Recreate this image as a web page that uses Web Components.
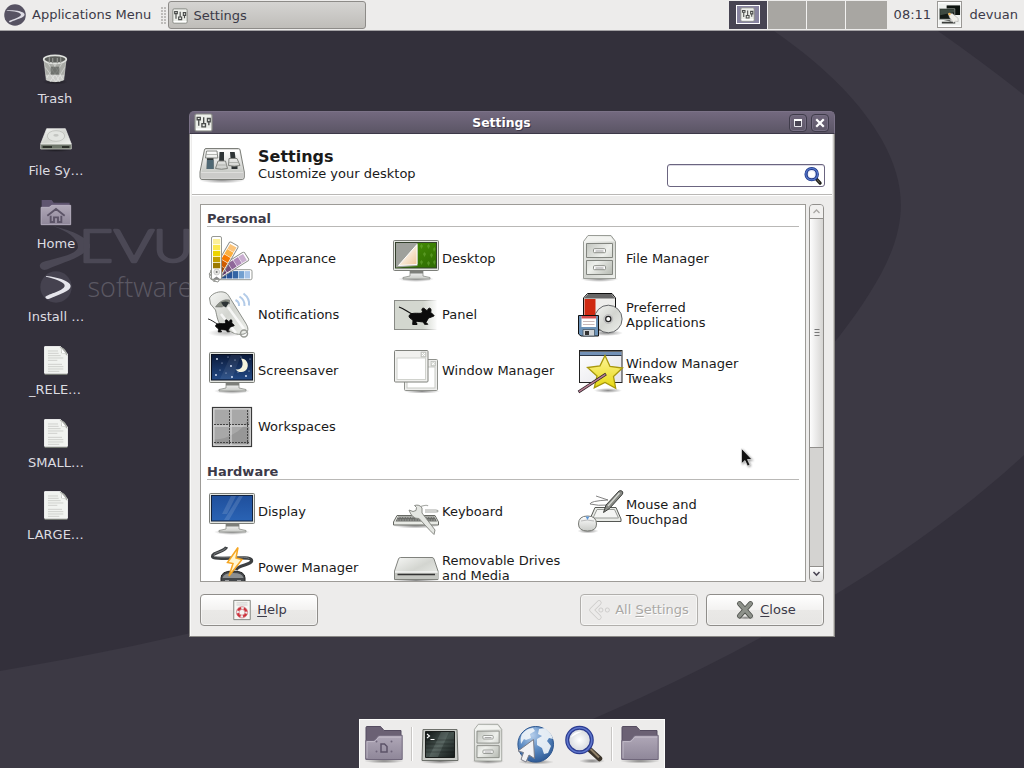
<!DOCTYPE html>
<html lang="en">
<head>
<meta charset="utf-8">
<title>Settings</title>
<style>
html,body{margin:0;height:100%;overflow:hidden;background:#33303b}
body{font:13px/15px "DejaVu Sans",Verdana,sans-serif;color:#1a1a1a}
</style>
</head>
<body>
<desk-top></desk-top>
<script>
const DEFS = `<defs>
<linearGradient id="m" x2="0" y2="1"><stop offset="0" stop-color="#fff"/><stop offset="1" stop-color="#c9cbc7"/></linearGradient>
<linearGradient id="md" x2="1" y2="1"><stop offset="0" stop-color="#f6f7f5"/><stop offset=".5" stop-color="#d3d5d0"/><stop offset="1" stop-color="#eef0ec"/></linearGradient>
<linearGradient id="dr" x2="1" y2="1"><stop offset="0" stop-color="#c2c5bf"/><stop offset=".5" stop-color="#eef0ec"/><stop offset="1" stop-color="#b4b8b0"/></linearGradient>
<linearGradient id="bl" x2="0" y2="1"><stop offset="0" stop-color="#1f4f9c"/><stop offset="1" stop-color="#2a63b4"/></linearGradient>
<linearGradient id="nt" x2="0" y2="1"><stop offset="0" stop-color="#0b1a3a"/><stop offset="1" stop-color="#234a86"/></linearGradient>
<linearGradient id="fo" x2="0" y2="1"><stop offset="0" stop-color="#b0a8b8"/><stop offset="1" stop-color="#8f8799"/></linearGradient>
<linearGradient id="ye" x2="0" y2="1"><stop offset="0" stop-color="#fff59a"/><stop offset="1" stop-color="#e6d80f"/></linearGradient>
<linearGradient id="pn" x2="1" y2="0"><stop offset="0" stop-color="#d3d7cf"/><stop offset=".65" stop-color="#d3d7cf"/><stop offset="1" stop-color="#fff"/></linearGradient>
<linearGradient id="ps" x2="1" y2="0"><stop offset="0" stop-color="#888a85"/><stop offset=".7" stop-color="#a0a29d"/><stop offset="1" stop-color="#fff"/></linearGradient>
<linearGradient id="gn" x2="1" y2="1"><stop offset="0" stop-color="#4a9407"/><stop offset="1" stop-color="#2e6b02"/></linearGradient>
<linearGradient id="pg" x2="1" y2="1"><stop offset=".3" stop-color="#fbf8f2"/><stop offset="1" stop-color="#f0c698"/></linearGradient>
<linearGradient id="te" x2="1" y2="1"><stop offset="0" stop-color="#0f1413"/><stop offset=".5" stop-color="#46534f"/><stop offset="1" stop-color="#141a19"/></linearGradient>
<radialGradient id="gl" cx=".4" cy=".25" r=".8"><stop offset="0" stop-color="#b4cdea"/><stop offset=".5" stop-color="#5d8cc4"/><stop offset="1" stop-color="#2b5691"/></radialGradient>
<radialGradient id="sh"><stop offset="0" stop-opacity=".45"/><stop offset="1" stop-opacity="0"/></radialGradient>
<radialGradient id="le" cx=".5" cy=".5" r=".6"><stop offset="0" stop-color="#fff"/><stop offset="1" stop-color="#c9cdd4"/></radialGradient>
<linearGradient id="wd" x2="1" y2="1"><stop offset="0" stop-color="#fff"/><stop offset="1" stop-color="#e4e4ea"/></linearGradient>
</defs>`;
const MOUSE = `<path d="M0 .5C5 2 8 5 13 7.500" fill="none" stroke="#111" stroke-width="1.200"/><path d="M10.500 8.500c2-2.500 8-1.500 12-1.700l1-1.800c-1.500-2.500 0-4 1.800-3l1.700 1.700 1.500.3c.5-3 3.500-3 3.500-.5l-.3 2.500 3 2.500c.8.800 0 1.500-1.500 1.700l-3.700 1.300c-.8 1.500-1.500 2.500-2.500 4.500l1.800 1.800h-3.300l-1-2.300-7-.8-.8 2.300h1.300v1h-4.300l.3-3.800-1.800-2c-2-1-2.700-2.200-1.700-3.700z" fill="#0b0b0b" stroke="#0b0b0b"/>`;
const BEZEL = `<ellipse cx="24" cy="45" rx="18" ry="3" fill="url(#sh)"/><path d="M18 36h13v6l7 1.500v1.500H11v-1.500l7-1.500z" fill="url(#m)" stroke="#8d8f8a" stroke-width=".8"/><path d="M18 37h13v2.500H18z" fill="#7d7f7a"/><rect x="1.500" y="6.500" width="45" height="30" rx="1" fill="#e4e6e1" stroke="#7c7e79"/>`;
const CAB = `<ellipse cx="23.500" cy="45" rx="19" ry="3" fill="url(#sh)"/><path d="M7.500 7.500L12 1.500H35L39.500 7.500V44.500H7.500z" fill="url(#md)" stroke="#9a9d97"/><path d="M8.500 7.500L12.500 2.500H34.500L38.500 7.500z" fill="#f2f3f0"/><g fill="url(#dr)" stroke="#82857f"><path d="M10.500 9.500h26v14h-26zM10.500 26.500h26v14h-26z"/><rect x="17.500" y="14.700" width="12" height="4" rx="1" fill="#fff" stroke="#8a8d87"/><rect x="17.500" y="31.700" width="12" height="4" rx="1" fill="#fff" stroke="#8a8d87"/></g><path d="M19.500 17h8M19.500 34h8" stroke="#999"/>`;
const strip = (r, c) => `<g transform="translate(8.500 40.700) rotate(${r})"><rect x="-5" y="-35.500" width="10" height="41.500" rx="1.500" fill="#fff" stroke="#8b8d88" stroke-width=".9"/>${c.map((k, i) => `<rect x="-3.600" y="${-33.500 + i * 6}" width="7.400" height="5.500" fill="${k}"/>`).join('')}</g>`;
const stars = [[9,13],[14,17],[20,11],[23,20],[27,14],[12,24],[8,29],[18,27],[30,26],[38,30],[42,13],[41,25],[24,31],[33,11]];
const FOLDER = `<ellipse cx="24" cy="41" rx="20" ry="2.500" fill="url(#sh)"/><path d="M6 39V7.500q0-1 1-1h13q1 0 1.500 1l2.500 3H41v10z" fill="#6b6174" stroke="#554c60"/><path d="M5.800 39.500V20.500H13q1.500 0 2.500-1.200l2.500-3.100q1-.9 2-.9h22.200V39.500z" fill="url(#fo)" stroke="#6f667a"/><path d="M7 38V21.600h6.500q1.500 0 2.500-1.200l2.700-3.200h22.500" fill="none" stroke="#c6c0cd" stroke-width=".8"/>`;
const ICONS = {
appearance: strip(90, ['#a5c3e8','#729fcf','#3465a4','#2a5599','#204a87']) + strip(58, ['#c9aed0','#b08aba','#8f6799','#75507b','#5c3566']) + strip(30, ['#fcc479','#fcaf3e','#f57900','#ce5c00','#a04800']) + `<rect x="3.500" y="2.500" width="10" height="43" rx="1.500" fill="#fff" stroke="#8b8d88" stroke-width=".9"/><path fill="#fcf09a" d="M5 5h7.200v5.300H5z"/><path fill="#fce94f" d="M5 11h7.200v5.300H5z"/><path fill="#edd400" d="M5 17h7.200v5.300H5z"/><path fill="#c4a000" d="M5 23h7.200v5.300H5z"/><path fill="#9c7a00" d="M5 29h7.200v5.300H5z"/><circle cx="8.700" cy="38" r="3" fill="#e6e6e2" stroke="#bbb" stroke-width=".6"/><circle cx="8.700" cy="38" r="1" fill="#777"/><path d="M5 45l3.500-2.500 3.500 2.500" fill="#888"/>`,
desktop: BEZEL + `<rect x="3.500" y="8.500" width="41" height="25.500" fill="url(#gn)" stroke="#33402c"/><g fill="#7db84a" opacity=".45"><path d="M28 12l1.500-2 1.500 2-1.500 3zM35 12l1.500-2 1.500 2-1.500 3zM41 15l1.500-2 1 2-1.500 3zM31 20l1.500-2 1.500 2-1.500 3zM38 21l1.500-2 1.500 2-1.500 3zM28 28l1.500-2 1.500 2-1.500 3zM35 29l1.500-2 1.500 2-1.500 3zM41 28l1.500-2 1 2-1 3z"/></g><path d="M4 9h21.500v23L4 33.500z" fill="#9fa19c"/><path d="M6.500 31.500L25 10.500V30.500z" fill="url(#pg)" stroke="#fff"/>`,
files: CAB,
notify: `<ellipse cx="18" cy="43" rx="18" ry="4" fill="url(#sh)" opacity=".6"/><path d="M1.500 8C4 3 12 .5 17 2.500c3 1 4 4 6 7L37 32c4 6 4 10-1 12-5 1-10 0-14-3L13 36C9 30 9 26 7.500 20L2.500 14z" fill="url(#md)" stroke="#8d908a"/><path d="M13 24l15 19M20 17l16 22" stroke="#fff" stroke-width="2.500" opacity=".8"/><path d="M7.500 17c4-6 9-8 14-7l0 4c-3-1-6 3-8 3z" fill="#8b9086" stroke="#666" stroke-width=".5"/><path d="M13 12.500q5-2 8 0l-3 5q-3-1-5-5z" fill="#2e3436"/><circle cx="36" cy="43.500" r="3.500" fill="none" stroke="#9a9c97" stroke-width="1.500"/><g fill="none" stroke="#b3cbe8" stroke-width="2"><path d="M27.500 10q4 2 3.500 6M31.500 6.500q5.500 3.500 5 9.500M35.500 3.500q6.500 5 5.500 12"/></g><g transform="translate(0 28.500) scale(.75)">${MOUSE}</g>`,
panel: `<rect x="2.500" y="10.500" width="43.500" height="29" fill="url(#pn)" stroke="url(#ps)"/><path d="M44.500 10v30h3V10z" fill="#fff" opacity=".8"/><g transform="translate(7 16.500)">${MOUSE}</g>`,
prefs: `<ellipse cx="30" cy="43" rx="17" ry="3" fill="url(#sh)"/><path d="M7.500 8l4-4.500H36L39.500 8v32h-32z" fill="#eeeeec" stroke="#111"/><path d="M8 8.500l4-4.500H35.500l3.500 4.500z" fill="#666"/><path d="M8.500 9h11v17h-11z" fill="#cf2a12"/><circle cx="32.300" cy="29" r="13.800" fill="url(#md)" stroke="#55575a" stroke-width=".9"/><circle cx="32.300" cy="29" r="4.500" fill="#ccc" stroke="#aaa" stroke-width=".5"/><circle cx="32.300" cy="29" r="2.600" fill="#fff" stroke="#222" stroke-width="1.200"/><path d="M2.500 25.500h20V46H5l-2.500-2z" fill="#6d93b8" stroke="#111"/><path d="M5.500 26h14.500v11H5.500z" fill="#fff"/><path d="M5.500 26h14.500v2.500H5.500z" fill="#d85050"/><path d="M7 31.500h11.500M7 34.500h11.500" stroke="#c9b9b9"/><path d="M7 39.500h11.500V46H7z" fill="#cfd3d6" stroke="#456" stroke-width=".8"/><path d="M9 41h4v4H9z" fill="#333"/>`,
saver: BEZEL + `<rect x="3.500" y="8.500" width="41" height="25.500" fill="url(#nt)" stroke="#0a1020"/><path d="M23 9h10l-9 24H12z" fill="#fff" opacity=".07"/><path d="M33 12.500a6.800 6.800 0 1 1-5.500 10.800c6.500 1.500 9-5 5.500-10.800z" fill="#f5f3dc"/>` + stars.map((s, i) => `<circle cx="${s[0]}" cy="${s[1]}" r="${i % 3 ? .5 : .9}" fill="#e5edff"/>`).join(''),
wm: `<ellipse cx="30" cy="45.500" rx="18" ry="2" fill="url(#sh)"/><g><rect x="12.500" y="13.500" width="33" height="31" rx="1" fill="#eeeeec" stroke="#8f918c"/><rect x="15" y="21" width="28" height="21" fill="#fff" stroke="#c8cac5"/><rect x="39" y="15.500" width="4.500" height="4.500" fill="#d8dad5" stroke="#b5b7b2" stroke-width=".6"/><rect x="2.500" y="4.500" width="33.500" height="31.500" rx="1" fill="#f1f1ef" stroke="#80827d"/><rect x="5" y="12" width="28.500" height="21.500" fill="#fff" stroke="#d0d2cd"/><rect x="29" y="6" width="5" height="5" fill="#d3d5d0" stroke="#b5b7b2" stroke-width=".6"/><path d="M30 7l3 3M33 7l-3 3M40 16.500l2.500 2.500M42.500 16.500L40 19" stroke="#fff"/></g>`,
tweaks: `<ellipse cx="32" cy="44.500" rx="14" ry="2.500" fill="url(#sh)"/><rect x="3.500" y="4.500" width="42.500" height="32" fill="url(#wd)" stroke="#222"/><path d="M4 5h41.500v1.500H4z" fill="#666"/><path d="M4 6h41.500v3H4z" fill="#7291b8"/><path d="M4 9.500h41.500" stroke="#2a3648"/><path d="M29 9.500L34 20.500 46.500 22 37.500 30.500 39.700 42.300 29 36.500 18.300 41.700 21 30 11.500 21.500 24 19.800z" fill="url(#ye)" stroke="#a8980c" stroke-width="1.300"/><path d="M2.500 46L30 28" stroke="#2d2028" stroke-width="2.800"/><path d="M3 45.700L29.500 28.400" stroke="#b98094" stroke-width="1.400"/>`,
spaces: `<rect x="4.500" y="5.500" width="39" height="39" fill="#dcdcdc" stroke="#3a3a3a" stroke-width="1.200"/><path d="M6.500 7.500h16v16h-16zM23.500 7.500h18v16h-18zM6.500 24.500h16v18h-16zM23.500 24.500h18v18h-18z" fill="#979797"/><path d="M6.500 7.500h35q0 14-12 22t-23 8z" fill="#fff" opacity=".17"/><path d="M6 22.500h36M21.500 8v34M39.500 8v34M6 40.500h36" stroke="#444" stroke-width="1" stroke-dasharray="2 1"/>`,
display: BEZEL + `<rect x="3.500" y="8.500" width="41" height="25.500" fill="url(#bl)" stroke="#12233f"/><path d="M23 9h5l-9 18h-5zM31 9h4l-14 24h-5z" fill="#fff" opacity=".13"/>`,
keyboard: `<ellipse cx="24" cy="39" rx="23" ry="2.500" fill="url(#sh)"/><path d="M5 28.500H43L46.500 35v3H1.500v-3z" fill="#e8eae5" stroke="#666863"/><path d="M6 29.500h36.500l2.500 5H3.500z" fill="#6a6c68"/><path d="M6 30.500h38M5 33h40" stroke="#bbb" stroke-width=".7" stroke-dasharray="1.600 1"/><path d="M27 20q8-3 9-1M33 25h11q2 0 2-1t-2-1H33" fill="none" stroke="#a6a8a4" stroke-width="1.200"/><path d="M17 23l4 1.500 3-1 .5-3-2-2q5-1.500 7.500 2.500l0 5L43 43l-1 4.500-4-4L27 31.500q-7 .5-10-8.500z" fill="#e4e6e2" stroke="#8a8c87"/>`,
touch: `<path d="M19 20.500H40L45 32v2.500H14V32z" fill="#e9ebe7" stroke="#555753"/><path d="M21 22.500h17.500l4 8.500H17z" fill="#f4f5f3" stroke="#999b97"/><path d="M20 9l12 4q-18 1-18 4 8 2 18 1" fill="none" stroke="#777" stroke-width=".9"/><path d="M27.500 25.500L30 18 43 4q2-1 3.500.5.800 1.500-.3 3L33.500 21.500z" fill="#888a85" stroke="#3f413e"/><path d="M32 19L43.500 6" stroke="#d8dad5" stroke-width="1.300"/><ellipse cx="12" cy="44" rx="10.500" ry="2.500" fill="url(#sh)"/><path d="M2.500 37q0-8 9-8t9 8q0 7-9 7t-9-7z" fill="url(#m)" stroke="#777974"/><path d="M5 34q6-2 13 0" fill="none" stroke="#bbb"/><path d="M9.500 29.500h4L11.500 33z" fill="#5b94d6"/>`,
power: `<path d="M18.500 4C17 9 4 9 4.500 13.500S42 12 43.500 17 30 21.500 28 27" fill="none" stroke="#3d4042" stroke-width="3.200"/><path d="M17.500 5C16 9 5 9 6 12.500S40 12 41.500 16" fill="none" stroke="#8a8d8f" stroke-width=".8"/><path d="M13 48V35q0-7 12-7t12 7v13z" fill="#44474a" stroke="#222"/><path d="M14.500 35q1-5 10.500-5t10.500 5z" fill="#8b8e90"/><path d="M17 38h4M29 38h4" stroke="#eee"/><path d="M30 4.500L19.500 19.500 25 20.500 21 33 34 16.500 28 15z" fill="#fff6d0" stroke="#f5a623" stroke-width="1.500"/>`,
drive: `<ellipse cx="24" cy="37.500" rx="23" ry="2.500" fill="url(#sh)"/><path d="M8.500 14.500H40q1.500 0 2 1.500L46 28v8.500H2.500V28L6.500 16q.5-1.500 2-1.500z" fill="url(#md)" stroke="#80827d"/><path d="M3 29.500h43v6.500H3z" fill="#c4c6c1"/><path d="M5.500 31.500h37.500" stroke="#333" stroke-width="1.600"/><path d="M3 29h43" stroke="#fff"/>`,
mixer: `<ellipse cx="24" cy="40" rx="23" ry="3.500" fill="url(#sh)"/><path d="M8 8.500H40.500q1.300 0 1.600 1.500L46.300 32v5q0 2.500-2 2.500H4q-2 0-2-2.500v-5L6.400 10q.3-1.500 1.600-1.500z" fill="#dededc" stroke="#7d7f7a"/><path d="M3.500 32h41.500L41 10H7.500z" fill="url(#m)"/><path d="M3 33h42.500v4q0 1.500-1.500 1.500H4.500Q3 38.500 3 37z" fill="#cbcbc9"/><path d="M9 16h6.500v13H8.700zM21.500 12h4.500v11h-5zM32 12h4.700l.8 6h-5zM33.500 25h6v4h-6z" fill="#2e3436"/><path d="M9 20h6.500v9H8.700z" fill="#4f6874"/><g fill="url(#m)" stroke="#777974" stroke-width=".9"><path d="M8.500 11h10.500l.8 7H7.500zM20 21h7.500l2 7.500q-6 1.500-12 0zM31 18.500h8l3 7q-6 1.500-11.500 0z"/></g><path d="M7.800 14.500h11.700M18.500 25h10.500M31 22.500h9.500" stroke="#a5a7a2" stroke-width=".8"/>`,
mini: `<rect x="2.500" y="2.500" width="43" height="43" rx="4" fill="#eceee9" stroke="#8a8c87" stroke-width="3"/><path d="M5 39h38v4H5z" fill="#fff"/><g fill="none" stroke="#4a4c4b" stroke-width="3.400"><path d="M8 11v6h8v-6zM12 17v15M20 27v8h9v-8zM24.500 11v16M34 14v8h7v-8zM37.500 22v9"/></g>`,
swirl: `<circle cx="24" cy="24" r="23.500" fill="#565262"/><path d="M6 14C24 13 44 16 45 23 45 30 26 34 15 39q-4 1.500-4-1c0-3 26-8 26-14.500C37 18 22 15 6 15z" fill="#dddce4"/>`,
install: `<circle cx="24" cy="25.500" r="23.500" fill="#45424f"/><path d="M9 9C28 11 46 17 46 24 46 32 28 37 14 43q-5 2-6-2c0-4 27-9 29-17C38 18 22 13 9 10z" fill="#e6e6ec"/>`,
trash: `<g transform="translate(1.500 3)"><ellipse cx="23" cy="42" rx="19" ry="4" fill="url(#sh)"/><path d="M6 9l3.500 30q13 5 26 0L39 9z" fill="#a9aba6" stroke="#d8dad5"/><path d="M12 14l18 28M20 14l14 24M8 20l16 22M33 14L15 42M25 14L10 36M37 20L24 42" stroke="#d2d4d0" stroke-width="1.200"/><path d="M16 19h13v12H16z" fill="#4a4c4a" opacity=".6"/><path d="M8.500 31l1.500 8q12.500 5 25 0l1.500-8z" fill="#fff" opacity=".4"/><ellipse cx="22.500" cy="8" rx="17" ry="6" fill="#5b5d5a" stroke="#dfe1dd" stroke-width="2.500"/><path d="M14 5v8M19 6v8M26 6v8M31 5v8" stroke="#8d8f8b" stroke-width="2"/></g>`,
disk: `<g transform="translate(0 1)"><ellipse cx="24" cy="38" rx="24" ry="3" fill="url(#sh)"/><path d="M10 6H38L47 29H1z" fill="url(#md)" stroke="#f5f5f3"/><ellipse cx="24" cy="17" rx="13" ry="8" fill="#e3e5e1" stroke="#b5b7b2"/><ellipse cx="24" cy="16" rx="4" ry="2" fill="#c4c6c2"/><path d="M1 29.500h46v7H1z" fill="#6f776b" stroke="#dcdfd8"/><path d="M4 33.500h14M33 33.500h11" stroke="#2c302a" stroke-width="3"/></g>`,
home: `<path d="M2.500 34V4.500h15l3 4h24v12z" fill="#5f5570"/><path d="M1.700 41.500V15.500h12l4-3h28.300v29z" fill="url(#fo)" stroke="#bdb6c6" stroke-width="1.300"/><path d="M11 28L24 18 37 28M16 28v9.500h5v-7h6v7h5V28" fill="none" stroke="#5c5467" stroke-width="2.800"/>`,
doc: `<g transform="translate(0 2.500)"><path d="M7 3h24l10 11v29H7z" fill="#f1f3f0" stroke="#fff" stroke-width="1.500"/><path d="M7 44.500h34" stroke="#84897f" stroke-width="1.500"/><path d="M29 3q4 2 3 10 6-1 9 4C41 9 36 4 29 3z" fill="#a9aca6"/><path d="M32 5l1 7.500 6 1z" fill="#fff"/><path d="M12 9.500h15M12 13h16M12 16.500h19M12 20h23M12 23.500h14M12 29.500h21M12 33h23M12 36.500h23M12 40h17" stroke="#cfd1cd" stroke-width="1.500"/></g>`,
user: `<rect x="1" y="1" width="46" height="46" fill="#eef0ee"/><path d="M18 5h28v20H18z" fill="#0c120e"/><path d="M3 12h32v22H3z" fill="#141b17" stroke="#a8ada8" stroke-width="1.500"/><path d="M4.500 13.500h29v6l-29 6z" fill="#3d4a41"/><path d="M12 36h14v3H8v4h28v-3" fill="#3a3d3a"/><path d="M21 22l9 0 12 10v7l-5-1-5 3-8-11z" fill="#efeee8" stroke="#999"/><circle cx="24" cy="23" r="2.500" fill="#f3b64c"/>`,
search: `<path d="M32 31L43 43" stroke="#1c1c18" stroke-width="8.500" stroke-linecap="round"/><path d="M35 34l7 8" stroke="#6a6654" stroke-width="3"/><circle cx="20.500" cy="19" r="15" fill="#e8ecf8" stroke="#1d3686" stroke-width="8.500"/><circle cx="20.500" cy="19" r="15.500" fill="none" stroke="#5475c8" stroke-width="3.500"/><circle cx="20.500" cy="19" r="8" fill="#fff"/>`,
help: `<path d="M6 3h36v42H6z" fill="#f6f6f4" stroke="#7d7f7a" stroke-width="2"/><path d="M12 8.500h24M12 13h24" stroke="#c4c4c2" stroke-width="1.800"/><circle cx="24" cy="29" r="9.500" fill="none" stroke="#ececec" stroke-width="6"/><circle cx="24" cy="29" r="9.500" fill="none" stroke="#d0303a" stroke-width="5" stroke-dasharray="9 5.920" stroke-dashoffset="-3"/><circle cx="24" cy="29" r="12.300" fill="none" stroke="#c2505a" stroke-width="1.200"/><circle cx="24" cy="29" r="6.300" fill="none" stroke="#c2505a" stroke-width="1.200"/>`,
close: `<ellipse cx="25" cy="41" rx="20" ry="4" fill="url(#sh)"/><path d="M12 10L36 37M36 10L12 37" stroke="#4d504b" stroke-width="11" stroke-linecap="round"/><path d="M12 10L36 37M36 10L12 37" stroke="#8d918a" stroke-width="7.500" stroke-linecap="round"/>`,
back: `<path d="M22 8L6 24 22 40" fill="none" stroke="#cccbc9" stroke-width="11" stroke-linejoin="round" stroke-linecap="round"/><path d="M22 8L6 24 22 40" fill="none" stroke="#ecebea" stroke-width="7.500" stroke-linejoin="round" stroke-linecap="round"/><g fill="#ecebea" stroke="#cccbc9" stroke-width="2"><circle cx="26" cy="24" r="4.500"/><circle cx="40" cy="24" r="4.500"/></g>`,
folder: FOLDER,
folderD: FOLDER + `<path d="M21 24h3.500l2.500 2.500v5.500h-6z" fill="none" stroke="#5c5368" stroke-width="1.500"/><g fill="#6f667b"><circle cx="16.500" cy="21.500" r="1"/><circle cx="31.500" cy="21.500" r="1"/><circle cx="16.500" cy="31.500" r="1"/><circle cx="31.500" cy="31.500" r="1"/></g>`,
term: `<ellipse cx="24" cy="41.500" rx="20" ry="2.500" fill="url(#sh)"/><path d="M7 9.500h34l1 31H6z" fill="#c9ccc7" stroke="#6d706b"/><path d="M9.500 11.500h29v26h-29z" fill="url(#te)" stroke="#1a1d1b"/><path d="M25 12h8l-11 25h-9z" fill="#a5b5ae" opacity=".2"/><path d="M10 20h28M10 24h28M10 28h28M10 32h28" stroke="#000" opacity=".25"/><path d="M11 14l2.500 2-2.500 2M14.500 19.500h4" fill="none" stroke="#fff" stroke-width="1.100"/>`,
globe: `<ellipse cx="24" cy="42" rx="18" ry="2.500" fill="url(#sh)"/><circle cx="23.700" cy="24.300" r="17.800" fill="url(#gl)" stroke="#2c568f"/><path d="M10 14q5-6 11-6l2 3-5 3 1 4-5 2-2-1-3 5q-1-6 1-10zM27 9l6-1q6 4 8 11l-4-1-2 3 4 5-3 7-4 1-2-6-5-3 0-6 5-3-4-2z" fill="#eef3f8" opacity=".93"/><path d="M21.500 19.500L6 31 11.500 32.500 9 39.500l5 2.500 3-7 5.500 3.500z" fill="#f2f2f4" stroke="#7b7d88"/>`,
mag: `<ellipse cx="32" cy="41" rx="13" ry="2.500" fill="url(#sh)"/><path d="M29 29L39.500 38.500" stroke="#3b342a" stroke-width="5.500" stroke-linecap="round"/><path d="M30.500 29L39 37.500" stroke="#8f8068" stroke-width="2"/><circle cx="19.500" cy="20" r="12.300" fill="url(#le)" stroke="#2b3b91" stroke-width="4"/><circle cx="19.500" cy="20" r="12.300" fill="none" stroke="#5f77cc" stroke-width="1.600"/><path d="M10.500 18q3-7.500 12-6.500-8 3-12 6.500z" fill="#fff"/>`
};
const def = (tag, html) => customElements.define(tag, class extends HTMLElement {
  connectedCallback() {
    if (this.shadowRoot) return;
    const t = document.createElement('template');
    t.innerHTML = typeof html === 'function' ? html(this) : html;
    this.attachShadow({mode: 'open'}).append(t.content.cloneNode(true));
  }
});

def('x-glyph', el => `<style>:host{display:block;flex:none;width:var(--s,48px);height:var(--s,48px)}svg{display:block;width:100%;height:100%;overflow:visible}</style><svg viewBox="0 0 48 48">${DEFS}${ICONS[el.getAttribute('name')]}</svg>`);

def('wall-paper', `<style>:host{display:block;width:1024px;height:768px}svg{display:block}</style>
<svg width="1024" height="768" viewBox="0 0 1024 768"><rect width="1024" height="768" fill="#33303b"/>
<path d="M774 31C830 70 862 105 882 140 918 205 902 255 838 338 720 470 420 600 0 671V768H470C700 684 900 570 1024 455V95Q985 64 938 31z" fill="#3c3944"/>
<path d="M53 226C74 231 89 238 88.500 246 87 257 60 263 47 269.500 40 272 37 264 43 262 55 258 77 255 78 247 78 238 67 231 53 226z" fill="#4b4855"/>
<g fill="#4b4855" stroke="#4b4855" stroke-width="2.600" stroke-linejoin="round" font-family="Lato,sans-serif" font-weight="300" font-size="45"><text x="79" y="262" textLength="34" lengthAdjust="spacingAndGlyphs">E</text><text x="114" y="262" textLength="40" lengthAdjust="spacingAndGlyphs">V</text><text x="153" y="262" textLength="40" lengthAdjust="spacingAndGlyphs">U</text></g>
<path d="M90 236h24v18H90z" fill="#33303b"/>
<text x="87.500" y="297" fill="#5b5863" font-family="Open Sans,sans-serif" font-weight="300" font-size="27" textLength="105">software</text></svg>`);

def('work-pager', `<style>:host{display:flex;gap:1px;height:28px;background:#f3f2f1;width:158px}
i{display:block;width:38px;background:#a8a6a2}i:last-child{flex:1}.a{background:#474452;display:flex;align-items:center;justify-content:center}
b{box-sizing:border-box;width:24px;height:19px;border:1px solid #fff;background:#8884a0;display:flex;align-items:center;justify-content:center;--s:15px}.a{padding-bottom:1px;box-sizing:border-box}</style><i class="a"><b><x-glyph name="mini"></x-glyph></b></i><i></i><i></i><i></i>`);

def('top-panel', `<style>:host{display:flex;box-sizing:border-box;height:31px;background:#edeceb;border-bottom:1px solid #a3a1a4;color:#3c3a48;align-items:flex-start;padding:1px 6px 0 4px}
span{line-height:15px;padding-top:6px;white-space:nowrap}
.menu{display:flex;width:157px;--s:22px}.menu x-glyph{margin:3px 6px 0 0}
.grip{width:5px;height:17px;margin:6px 2px 0 0;background:radial-gradient(circle at 1px 1px,#bcbab8 .7px,transparent .9px) 0 0/3px 3px}
.task{box-sizing:border-box;width:198px;height:28px;border:1px solid #8d8b88;border-radius:3px;background:linear-gradient(#d5d4d2,#bfbdb9);display:flex;--s:16px;padding-left:3px}
.task x-glyph{margin:6px 5.500px 0 0}
.sp{flex:1}.clock{margin-left:7px;width:43px}.u{box-sizing:border-box;width:25px;height:27px;border:1px solid #9a9895;background:#fff;padding:1px 0 0;--s:23px;margin-right:8px}</style>
<div class="menu"><x-glyph name="swirl"></x-glyph><span>Applications Menu</span></div><div class="grip"></div>
<div class="task"><x-glyph name="mini"></x-glyph><span>Settings</span></div><div class="sp"></div>
<work-pager></work-pager><span class="clock">08:11</span><div class="u"><x-glyph name="user"></x-glyph></div><span>devuan</span>`);

def('desk-icon', `<style>:host{display:flex;flex-direction:column;align-items:center;height:var(--row,73px);color:#dddce1;--s:32px;white-space:nowrap}span{margin-top:7px}</style><slot name="icon"></slot><span><slot></slot></span>`);

def('title-bar', `<style>:host{display:flex;box-sizing:border-box;height:23px;border:1px solid #7b7287;border-bottom:1px solid #3c3848;border-radius:5px 5px 0 0;background:linear-gradient(#73697f,#5b5565);color:#fff;align-items:center;padding:0 5px 0 4px;--s:19px;font-weight:bold;font-size:12.400px}
span{flex:1;text-align:center;padding-left:5px;line-height:21px;text-shadow:1px 1px #3e394a}
i{box-sizing:border-box;width:18px;height:18px;border:1px solid #3f3b4a;border-radius:4px;margin-left:4px;box-shadow:inset 0 0 0 1px #756d82}svg{display:block}</style>
<x-glyph name="mini"></x-glyph><span><slot></slot></span>
<i><svg width="16" height="16"><path d="M4.500 4.500h7v7h-7z" fill="#4a4654" stroke="#e8e7ec"/><path d="M4 5h8" stroke="#fff" stroke-width="2"/></svg></i><i><svg width="16" height="16"><path d="M5 5l6 6M11 5l-6 6" stroke="#fff" stroke-width="2.200" stroke-linecap="square"/></svg></i>`);

def('search-entry', `<style>:host{display:flex;box-sizing:border-box;width:158px;height:23px;border:1.500px solid #6b6580;border-radius:3px;background:#fff;box-shadow:inset 0 1px #dcdae4;justify-content:flex-end;align-items:center;padding-right:2px;--s:18px}</style><x-glyph name="search"></x-glyph>`);

def('dialog-header', `<style>:host{display:flex;box-sizing:border-box;height:61px;background:#fff;border-bottom:1px solid #bab8b6;padding:6px 7px 0 6px}
div{margin-left:12px;flex:1}h1{font-size:16px;line-height:19px;margin:7px 0 0}p{margin:0;line-height:15px}search-entry{margin-top:24px}</style>
<x-glyph name="mixer"></x-glyph><div><h1>Settings</h1><p>Customize your desktop</p></div><search-entry></search-entry>`);

def('setting-item', el => `<style>:host{display:flex;height:56px;align-items:center;box-sizing:border-box;padding-left:1px}span{margin-left:2px;width:124px;padding-top:1px}</style><x-glyph name="${el.getAttribute('icon')}"></x-glyph><span><slot></slot></span>`);

def('setting-group', el => `<style>:host{display:block}h2{font-size:13px;line-height:15px;height:15px;margin:0 0 3px;border-bottom:1px solid #b9b8b6;color:#3c3a48}
div{display:grid;grid-template-columns:184px 184px 184px}:host(:not(:first-child)) h2{margin-top:10px}</style><h2>${el.getAttribute('label')}</h2><div><slot></slot></div>`);

def('icon-view', `<style>:host{display:block;box-sizing:border-box;width:606px;height:378px;border:1px solid #9d9b97;background:#fff;overflow:hidden;padding:6px 6px 0}</style><slot></slot>`);

def('scroll-bar', `<style>:host{display:flex;flex-direction:column;box-sizing:border-box;width:15px;height:378px;border:1px solid #918f8c;border-radius:4px;background:#d4d3d1;overflow:hidden}
b{box-sizing:border-box;height:13px;background:#f1f0ef}b:last-child{background:linear-gradient(#fff,#ddd);border-top:1px solid #918f8c;margin-top:auto;height:15px}
i{box-sizing:border-box;height:230px;border:solid #918f8c;border-width:1px 0;background:linear-gradient(90deg,#fdfdfd,#d6d5d3);display:flex;align-items:center;justify-content:center;padding-bottom:2px}svg{display:block}</style>
<b><svg width="13" height="13"><path d="M3.500 8L6.500 5l3 3" fill="none" stroke="#aaa8a5" stroke-width="1.300"/></svg></b><i><svg width="6" height="8"><path d="M.5 1.500h5M.5 4.500h5M.5 7.500h5" stroke="#777"/></svg></i><b><svg width="13" height="13"><path d="M3.500 5L6.500 8l3-3" fill="none" stroke="#4a4654" stroke-width="1.600"/></svg></b>`);

def('push-button', el => `<style>:host{display:flex;box-sizing:border-box;width:118px;height:32px;border:1px solid #8f8d8a;border-radius:4px;background:linear-gradient(#fff,#f3f2f1 49%,#eae9e7 50%,#e6e5e3);color:#3c3a48;align-items:center;justify-content:center;gap:4px;--s:22px;box-shadow:inset 0 0 0 1px #fff8;white-space:nowrap;text-underline-offset:2px}
:host([disabled]){background:#ecebea;border-color:#b1afac;color:#aaa8a5;text-shadow:1px 1px #fff}span{padding-bottom:1px}</style><x-glyph name="${el.getAttribute('icon')}"></x-glyph><span><slot></slot></span>`);

def('settings-window', `<style>:host{display:flex;flex-direction:column;box-sizing:border-box;width:646px;height:526px}
.f{flex:1;box-sizing:border-box;border:solid #8b8986;border-width:0 1px 1px;background:#edeceb;box-shadow:inset 1px 0 #f9f9f8,inset -1px 0 #c9c7c4;padding:0 2px}
.m{display:flex;gap:3px;padding:9px 8px 0}.b{display:flex;gap:8px;padding:12px 8px 0}push-button:first-child{margin-right:auto}dialog-header{box-shadow:0 1px #fff}</style>
<title-bar>Settings</title-bar><div class="f"><dialog-header></dialog-header><div class="m">
<icon-view><setting-group label="Personal">
<setting-item icon="appearance">Appearance</setting-item><setting-item icon="desktop">Desktop</setting-item><setting-item icon="files">File Manager</setting-item>
<setting-item icon="notify">Notifications</setting-item><setting-item icon="panel">Panel</setting-item><setting-item icon="prefs">Preferred Applications</setting-item>
<setting-item icon="saver">Screensaver</setting-item><setting-item icon="wm">Window Manager</setting-item><setting-item icon="tweaks">Window Manager Tweaks</setting-item>
<setting-item icon="spaces">Workspaces</setting-item></setting-group>
<setting-group label="Hardware"><setting-item icon="display">Display</setting-item><setting-item icon="keyboard">Keyboard</setting-item><setting-item icon="touch">Mouse and<br>Touchpad</setting-item>
<setting-item icon="power">Power Manager</setting-item><setting-item icon="drive">Removable Drives<br>and Media</setting-item></setting-group></icon-view>
<scroll-bar></scroll-bar></div>
<div class="b"><push-button icon="help"><u>H</u>elp</push-button><push-button icon="back" disabled>All <u>S</u>ettings</push-button><push-button icon="close"><u>C</u>lose</push-button></div></div>`);

def('dock-bar', `<style>:host{display:flex;box-sizing:border-box;width:306px;height:49px;border:1px solid #fcfcfb;border-bottom:0;background:#edeceb}i{width:1px;height:34px;margin:7px 3px 0 3px;background:#c9c7c5;border-right:1px solid #fff}</style>
<x-glyph name="folderD"></x-glyph><i></i><x-glyph name="term"></x-glyph><x-glyph name="files" style="--s:41px;margin:3px 3px 0 4px"></x-glyph><x-glyph name="globe"></x-glyph><x-glyph name="mag"></x-glyph><i></i><x-glyph name="folder"></x-glyph>`);

def('mouse-pointer', `<style>:host{display:block}svg{display:block;filter:drop-shadow(1px 1px 1px #0006)}</style><svg width="14" height="20"><path d="M.5.500v15l3.500-3 2.500 5.500 2.500-1-2.500-5.500H11z" fill="#111" stroke="#fff" stroke-width=".6"/></svg>`);

def('desk-top', `<style>:host{display:flex;flex-direction:column;position:relative;width:1024px;height:768px;overflow:hidden}
wall-paper,settings-window,mouse-pointer,dock-bar{position:absolute}wall-paper{left:0;top:0}settings-window{left:189px;top:111px}mouse-pointer{left:740.500px;top:448px}dock-bar{left:359px;top:719px}top-panel{position:relative}
.icons{position:relative;width:112px;padding-top:21px}</style>
<wall-paper></wall-paper><top-panel></top-panel>
<div class="icons"><desk-icon style="margin-right:2px;--row:72px"><x-glyph slot="icon" name="trash"></x-glyph>Trash</desk-icon><desk-icon><x-glyph slot="icon" name="disk"></x-glyph>File Sy…</desk-icon><desk-icon><x-glyph slot="icon" name="home"></x-glyph>Home</desk-icon><desk-icon><x-glyph slot="icon" name="install"></x-glyph>Install …</desk-icon><desk-icon style="margin-right:2px"><x-glyph slot="icon" name="doc" style="margin-left:2px"></x-glyph>_RELE…</desk-icon><desk-icon style="--row:72px"><x-glyph slot="icon" name="doc"></x-glyph>SMALL…</desk-icon><desk-icon style="margin-right:1px"><x-glyph slot="icon" name="doc" style="margin-left:1px"></x-glyph>LARGE…</desk-icon></div>
<settings-window></settings-window><dock-bar></dock-bar><mouse-pointer></mouse-pointer>`);
</script>
</body>
</html>
